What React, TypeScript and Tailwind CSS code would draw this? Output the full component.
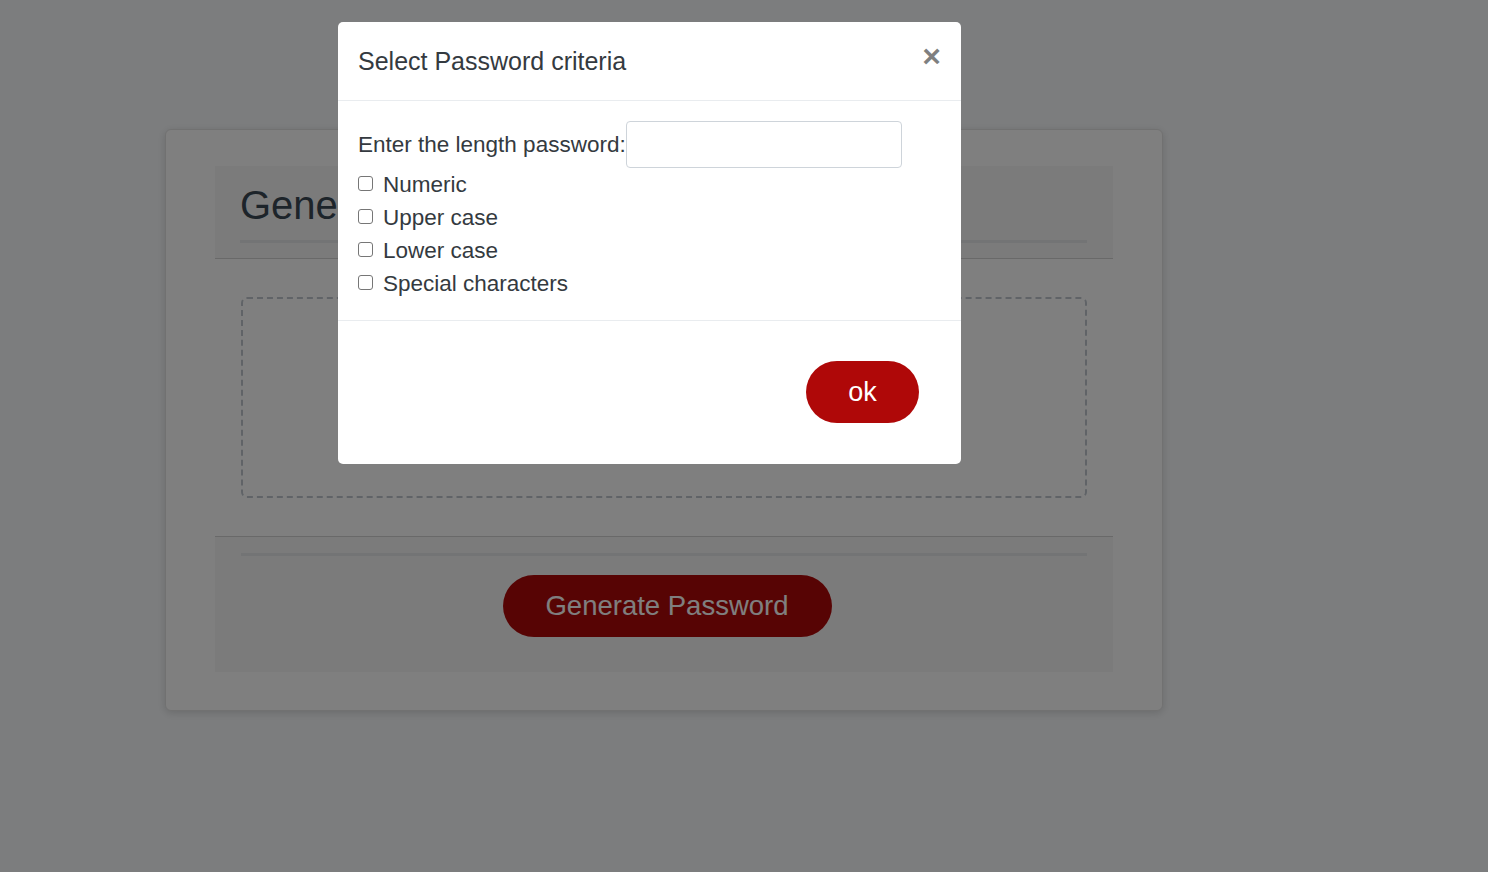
const CRITERIA = ['Numeric', 'Upper case', 'Lower case', 'Special characters']

function Checkbox({ label }: { label: string }) {
  return (
    <label className="flex items-center h-[33px] leading-[33px]">
      <input
        type="checkbox"
        className="appearance-none w-[15px] h-[15px] -mt-[3px] border border-[#767676] rounded-[3px] bg-white shrink-0"
      />
      <span className="ml-[10px]">{label}</span>
    </label>
  )
}

function CriteriaModal() {
  return (
    <div className="fixed inset-0 bg-black/50">
      <div className="ml-[338px] mt-[22px] w-[623px] bg-white rounded-[5px] text-[#343a40]">
        <div className="flex items-start justify-between px-[20px] pt-[21px] pb-[20px] border-b border-[#e9ecef]">
          <h5 className="text-[25px] leading-[37px] text-[#343a40]">Select Password criteria</h5>
          <button className="text-[32px] leading-none font-bold text-black/50 -mt-[3px]">×</button>
        </div>

        <div className="px-[20px] pt-[20px] pb-[20px] text-[22.5px]">
          <div className="flex items-center">
            <span>Enter the length password:</span>
            <input
              type="text"
              className="w-[276px] h-[47px] border border-[#ced4da] rounded-[4px] bg-white"
            />
          </div>
          {CRITERIA.map((c) => (
            <Checkbox key={c} label={c} />
          ))}
        </div>

        <div className="flex justify-end border-t border-[#e9ecef] pt-[40px] pb-[41px] pr-[42px]">
          <button className="w-[113px] h-[62px] rounded-full bg-[#af0808] text-white text-[27px]">
            ok
          </button>
        </div>
      </div>
    </div>
  )
}

export default function App() {
  return (
    <div
      className="min-h-[872px] bg-[#f9fbfd] pt-[129px]"
      style={{ fontFamily: '"Liberation Sans", Arial, sans-serif' }}
    >
      <div className="ml-[165px] w-[998px] bg-white border border-[#e3e3e3] rounded-[6px] shadow-[0_2px_8px_rgba(0,0,0,0.15)] px-[49px] pt-[36px] pb-[38px]">
        <div className="bg-[#f7f7f7] border-b border-black/15 px-[26px] pt-[15px] pb-[15px]">
          <h2 className="text-[40px] leading-[48px] text-[#3b4954] -ml-[1px] pb-[11px] border-b-[3px] border-[#e7e9eb]">
            Generate a Password
          </h2>
        </div>

        <div className="px-[26px] pt-[38px] pb-[38px]">
          <div className="h-[201px] border-2 border-dashed border-[#c0c7cf] rounded-[6px]" />
        </div>

        <div className="bg-[#f7f7f7] border-t border-black/15 px-[26px] pt-[16px] pb-[35px]">
          <div className="h-[3px] bg-[#e7e9eb]" />
          <div className="flex justify-center pt-[19px]">
            <button className="w-[329px] h-[62px] ml-[6px] rounded-full bg-[#af0808] text-white text-[27.5px]">
              Generate Password
            </button>
          </div>
        </div>
      </div>

      <CriteriaModal />
    </div>
  )
}
